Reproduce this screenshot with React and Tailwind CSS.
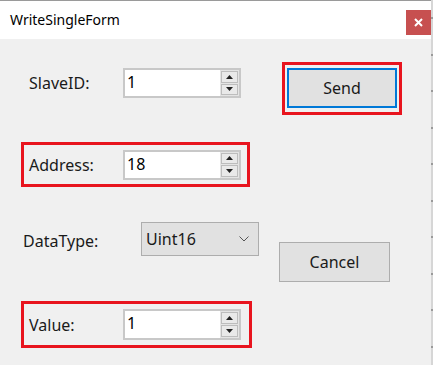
import React from 'react';

const font = { fontFamily: '"Noto Sans", "Open Sans", sans-serif' };

function Arrow({ up }) {
  return (
    <svg width="7" height="4" viewBox="0 0 7 4">
      {up ? <path d="M0 4h7L3.5 0z" fill="#222" /> : <path d="M0 0h7L3.5 4z" fill="#222" />}
    </svg>
  );
}

function NumberBox({ value, tall }) {
  return (
    <div className={`flex w-[118px] border-2 border-[#c8c8c8] bg-white ${tall ? 'h-[31px]' : 'h-[30px]'}`}>
      <div className="flex-1 pl-[2px] text-[16px] leading-[25px] text-black">{value}</div>
      <div className="flex w-[19px] flex-col gap-[1px] bg-[#e4e4e4] p-[1px]">
        <div className="flex flex-1 items-center justify-center border border-[#bdbdbd] bg-[#e9e9e9]">
          <Arrow up />
        </div>
        <div className="flex flex-1 items-center justify-center border border-[#bdbdbd] bg-[#e9e9e9]">
          <Arrow />
        </div>
      </div>
    </div>
  );
}

export default function App() {
  return (
    <div className="flex h-[365px] w-[433px] overflow-hidden bg-[#f0f0f0] text-[#1a1a1a]" style={font}>
      <div className="flex w-[431px] flex-col">
        {/* title bar */}
        <div className="flex h-[39px] items-start justify-between border-t border-[#9a9a9a] bg-white">
          <span className="ml-[10px] mt-[8px] text-[14px] text-black">WriteSingleForm</span>
          <button className="mt-[9px] flex h-[25px] w-[25px] items-center justify-center bg-[#c75050] text-white">
            <svg width="9" height="9" viewBox="0 0 9 9">
              <path d="M1 1l7 7M8 1L1 8" stroke="white" strokeWidth="2" />
            </svg>
          </button>
        </div>

        {/* row 1: SlaveID + Send */}
        <div className="mt-[23px] flex items-start">
          <div className="ml-[29px] mt-[6px] flex items-center">
            <span className="w-[94px] text-[16px]">SlaveID:</span>
            <NumberBox value="1" />
          </div>
          <div className="ml-[41px] border-[3px] border-[#e8141e] px-[2px] pb-[4px] pt-[3px]">
            <button className="h-[40px] w-[110px] border-2 border-[#0078d7] bg-[#e1e1e1] text-[16px]">
              Send
            </button>
          </div>
        </div>

        {/* row 2: Address */}
        <div className="ml-[21px] mt-[27px] flex h-[45px] w-[229px] items-center border-[3px] border-[#e8141e] pl-[5px]">
          <span className="w-[94px] text-[16px]">Address:</span>
          <NumberBox value="18" />
        </div>

        {/* row 3: DataType + Cancel */}
        <div className="mt-[35px] flex items-start">
          <span className="ml-[23px] mt-[7px] w-[118px] text-[16px]">DataType:</span>
          <div className="flex h-[34px] w-[118px] items-center justify-between border border-[#adadad] bg-[#e1e1e1] pl-[4px] pr-[9px]">
            <span className="text-[16px]">Uint16</span>
            <svg width="10" height="6" viewBox="0 0 10 6">
              <path d="M0.5 0.5L5 5L9.5 0.5" stroke="#555" fill="none" />
            </svg>
          </div>
          <button className="ml-[20px] mt-[20px] h-[40px] w-[111px] border border-[#adadad] bg-[#e1e1e1] text-[16px]">
            Cancel
          </button>
        </div>

        {/* row 4: Value */}
        <div className="ml-[21px] mt-[19px] flex h-[47px] w-[231px] items-center border-[3px] border-[#e8141e] pl-[5px]">
          <span className="w-[94px] text-[16px]">Value:</span>
          <NumberBox value="1" tall />
        </div>
      </div>
      <div className="flex w-[2px] flex-col justify-around bg-[#d6d6d6]">
        {[0, 1, 2, 3, 4, 5, 6, 7, 8, 9].map((i) => (
          <div key={i} className="h-[2px] bg-[#9a9a9a]" />
        ))}
      </div>
    </div>
  );
}
